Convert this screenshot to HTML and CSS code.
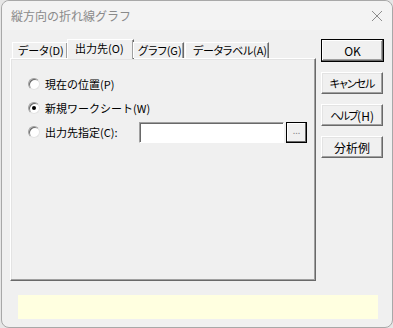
FILE: index.html
```html
<!DOCTYPE html>
<html lang="ja">
<head>
<meta charset="utf-8">
<link rel="stylesheet" href="styles.css">
</head>
<body>
<div class="window">
  <div class="titlebar">
    <span class="title">縦方向の折れ線グラフ</span>
    <svg class="close" width="12" height="12" viewBox="0 0 12 12"><path d="M1 1 L11 11 M11 1 L1 11" stroke="#8c8c8c" stroke-width="1" fill="none"/></svg>
  </div>
  <div class="content">
    <div class="leftcol">
      <div class="tabs">
        <div class="tab t1"><span class="pk">データ</span>(D)</div>
        <div class="tab sel t2">出力先(O)</div>
        <div class="tab t3"><span class="pk">グラフ</span>(G)</div>
        <div class="tab t4"><span class="pk tight">データラベル</span>(A)</div>
      </div>
      <div class="panel">
        <div class="row"><span class="radio"></span><span class="lbl">現在の位置(P)</span></div>
        <div class="row"><span class="radio on"></span><span class="lbl">新規ワークシート(W)</span></div>
        <div class="row"><span class="radio"></span><span class="lbl wide">出力先指定(C):</span><span class="input"></span><span class="browse">...</span></div>
      </div>
    </div>
    <div class="buttons">
      <div class="btn ok">OK</div>
      <div class="btn"><span class="pk n1">キャンセル</span></div>
      <div class="btn"><span class="pk n2">ヘルプ</span>(H)</div>
      <div class="btn">分析例</div>
    </div>
  </div>
  <div class="status"></div>
</div>
</body>
</html>
```
FILE: styles.css
```css
* { box-sizing: border-box; }
html, body { margin: 0; padding: 0; }
body {
  width: 393px; height: 328px;
  background: #e6e6e6;
  font-family: "Noto Sans CJK JP", "Noto Sans", sans-serif;
  font-size: 11px;
  color: #000;
  overflow: hidden;
}
.window {
  width: 392px; height: 328px;
  margin-left: 1px;
  background: #f0f0f0;
  border: 1px solid #a8a8a8;
  border-radius: 8px;
  display: flex;
  flex-direction: column;
}
.titlebar {
  height: 29px;
  display: flex;
  align-items: center;
  justify-content: space-between;
  padding: 0 8px 0 9px;
  background: #f3f3f3;
  border-radius: 8px 8px 0 0;
}
.title { color: #8a8a8a; font-size: 12px; }
.close { margin-right: 1px; }
.content {
  display: flex;
  padding: 9px 0 0 8px;
}
.leftcol { width: 306px; display: flex; flex-direction: column; }
.tabs {
  height: 19px;
  display: flex;
  align-items: flex-end;
  position: relative;
  z-index: 1;
}
.pk { font-feature-settings: "palt"; }
.tight { letter-spacing: -0.3px; }
.tab {
  height: 16px;
  line-height: 15px;
  border-top: 1px solid #fff;
  border-left: 1px solid #fff;
  border-right: 1px solid #696969;
  box-shadow: inset -1px 0 #a0a0a0;
  white-space: nowrap;
}
.t1 { width: 56px; margin-left: 2px; padding-left: 5px; }
.t2 { width: 67px; }
.t3 { width: 51px; padding-left: 4px; }
.t4 { width: 84px; margin-left: 1px; padding-left: 7px; }
.tab.sel {
  height: 20px;
  margin-bottom: -1px;
  background: #f0f0f0;
  line-height: 17px;
  padding-left: 7px;
  margin-left: -1px;
  margin-right: -1px;
}
.panel {
  height: 223px;
  border-top: 1px solid #fff;
  border-left: 1px solid #fff;
  border-right: 1px solid #696969;
  border-bottom: 1px solid #696969;
  box-shadow: inset -1px -1px #a0a0a0, inset 1px 1px #e3e3e3;
  padding: 13px 0 0 17px;
}
.row { height: 24px; display: flex; align-items: center; }
.radio {
  width: 12px; height: 12px;
  border-radius: 50%;
  background: #fff;
  border: 1px solid;
  border-color: #a0a0a0 #e3e3e3 #e3e3e3 #a0a0a0;
  box-shadow: inset 1px 1px #696969;
  display: flex;
  align-items: center;
  justify-content: center;
  margin-right: 5px;
}
.radio.on::after {
  content: "";
  width: 4px; height: 4px;
  border-radius: 50%;
  background: #000;
}
.lbl { white-space: nowrap; }
.lbl.wide { width: 94px; }
.input {
  width: 145px; height: 21px;
  background: #fff;
  border-top: 1px solid #a0a0a0;
  border-left: 1px solid #a0a0a0;
  border-right: 1px solid #fff;
  border-bottom: 1px solid #fff;
  box-shadow: inset 1px 1px #696969;
}
.browse {
  width: 21px; height: 21px;
  margin-left: 2px;
  border: 1px solid #000;
  background: #f0f0f0;
  box-shadow: inset -1px -1px #696969, inset 1px 1px #fff;
  color: #8a8a8a;
  font-size: 9px;
  text-align: center;
  line-height: 16px;
}
.buttons {
  margin-left: 5px;
  display: flex;
  flex-direction: column;
  gap: 10px;
  font-size: 12px;
}
.btn {
  width: 62px; height: 22px;
  border-top: 1px solid #fff;
  border-left: 1px solid #fff;
  border-right: 1px solid #696969;
  border-bottom: 1px solid #696969;
  box-shadow: inset -1px -1px #a0a0a0, inset 1px 1px #e3e3e3;
  display: flex;
  align-items: center;
  justify-content: center;
  white-space: nowrap;
}
.n1 { font-size: 11px; letter-spacing: -1px; }
.n2 { font-size: 11px; letter-spacing: -1.5px; }
.btn.ok {
  width: 63px;
  height: 23px;
  border: 1px solid #000;
  box-shadow: inset -1px -1px #696969, inset 1px 1px #fff, inset -2px -2px #a0a0a0;
}
.status {
  margin: 14px 0 0 16px;
  width: 360px;
  height: 24px;
  background: #ffffe0;
}
```
